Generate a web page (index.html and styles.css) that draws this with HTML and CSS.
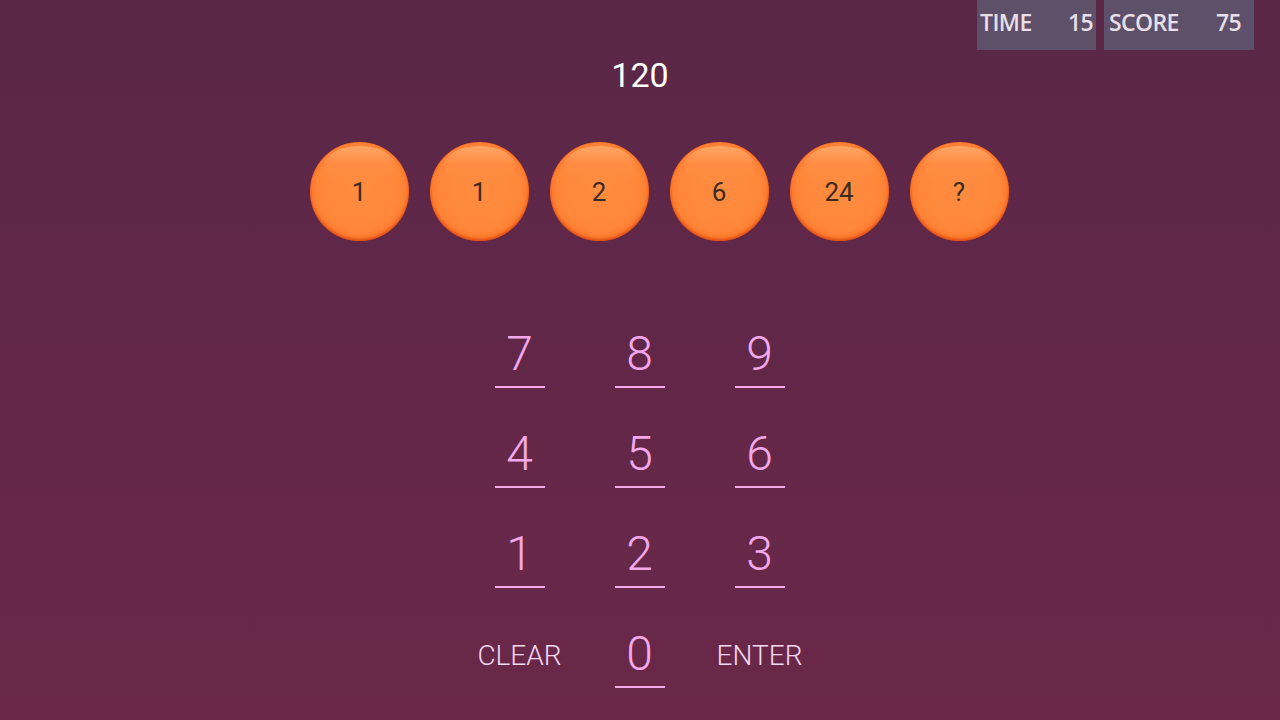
FILE: index.html
```html
<!DOCTYPE html>
<html>
<head>
<meta charset="utf-8">
<link rel="stylesheet" href="styles.css">
</head>
<body>
<div class="page">
  <div class="hud">
    <div class="stat stat-time"><span>TIME</span><span>15</span></div>
    <div class="stat stat-score"><span>SCORE</span><span>75</span></div>
  </div>
  <div class="target">120</div>
  <div class="balls">
    <div class="ball"><span>1</span></div>
    <div class="ball"><span>1</span></div>
    <div class="ball"><span>2</span></div>
    <div class="ball"><span>6</span></div>
    <div class="ball"><span>24</span></div>
    <div class="ball"><span>?</span></div>
  </div>
  <div class="pad">
    <div class="cell"><div class="key">7</div></div>
    <div class="cell"><div class="key">8</div></div>
    <div class="cell"><div class="key">9</div></div>
    <div class="cell"><div class="key">4</div></div>
    <div class="cell"><div class="key">5</div></div>
    <div class="cell"><div class="key">6</div></div>
    <div class="cell"><div class="key">1</div></div>
    <div class="cell"><div class="key">2</div></div>
    <div class="cell"><div class="key">3</div></div>
    <div class="cell"><div class="action">CLEAR</div></div>
    <div class="cell"><div class="key">0</div></div>
    <div class="cell"><div class="action">ENTER</div></div>
  </div>
</div>
</body>
</html>
```
FILE: styles.css
```css
html, body {
  margin: 0;
  padding: 0;
}
body {
  width: 1280px;
  height: 720px;
  overflow: hidden;
  background: linear-gradient(180deg, #5a2747 0%, #632748 55%, #6b2849 100%);
  font-family: Roboto, "Noto Sans", sans-serif;
}
.page {
  display: flex;
  flex-direction: column;
  width: 1280px;
  height: 720px;
}
.hud {
  display: flex;
  justify-content: flex-end;
  gap: 8px;
  padding-right: 26px;
  height: 50px;
}
.stat {
  display: flex;
  justify-content: space-between;
  box-sizing: border-box;
  height: 50px;
  padding: 0 4px 0 4px;
  background: #5e5068;
  color: #e8dfe8;
  font-family: "Open Sans", "Noto Sans", sans-serif;
  font-size: 23px;
  font-weight: 600;
  letter-spacing: -0.6px;
  line-height: 44px;
}
.stat-time { width: 119px; padding: 0 3px 0 3px; }
.stat-score { width: 150px; padding: 0 13px 0 5px; }
.target {
  margin-top: 5px;
  text-align: center;
  color: #ffffff;
  font-size: 34px;
  line-height: 40px;
  font-weight: 400;
}
.balls {
  display: flex;
  justify-content: center;
  gap: 21px;
  padding-left: 38px;
  margin-top: 47px;
}
.ball {
  position: relative;
  width: 99px;
  height: 99px;
  border-radius: 50%;
  background: radial-gradient(circle at 50% 48%, #ff8c40 0%, #ff873a 58%, #fb7226 76%, #f25a12 88%, #e0480a 100%);
  box-shadow: inset 0 -2px 3px rgba(200, 50, 0, 0.6), 0 0 1px rgba(190, 50, 10, 0.8);
  display: flex;
  align-items: center;
  justify-content: center;
}
.ball::before {
  content: "";
  position: absolute;
  left: 14px;
  right: 14px;
  top: 4px;
  height: 40px;
  border-radius: 50% 50% 45% 45%;
  background: linear-gradient(180deg, rgba(255, 200, 150, 0.5) 0%, rgba(255, 170, 110, 0.12) 45%, rgba(255, 160, 100, 0) 100%);
}
.ball span {
  position: relative;
  color: #3d2a20;
  font-size: 26px;
  line-height: 30px;
}
.pad {
  display: grid;
  grid-template-columns: repeat(3, 120px);
  grid-auto-rows: 62px;
  row-gap: 38px;
  justify-content: center;
  margin-top: 85px;
  margin-left: -1px;
}
.cell {
  display: flex;
  justify-content: center;
}
.key {
  width: 50px;
  padding-bottom: 4px;
  border-bottom: 2px solid #f2a8ea;
  color: #f2a8ea;
  font-size: 48px;
  font-weight: 300;
  line-height: 56px;
  text-align: center;
}
.action {
  padding-top: 14px;
  color: #f3d8f0;
  font-size: 28px;
  font-weight: 300;
  line-height: 32px;
}
```
